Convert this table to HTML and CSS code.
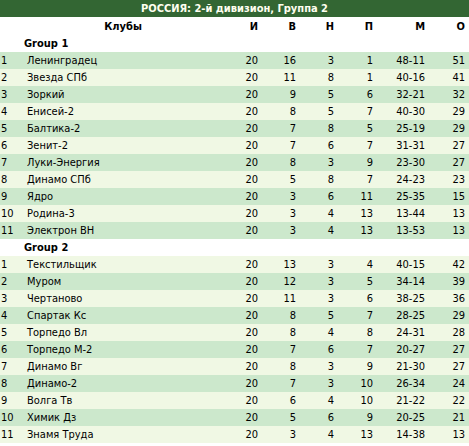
FILE: index.html
```html
<!DOCTYPE html>
<html lang="ru">
<head>
<meta charset="utf-8">
<title>РОССИЯ: 2-й дивизион, Группа 2</title>
<link rel="stylesheet" href="styles.css">
</head>
<body>
<div class="title">РОССИЯ: 2-й дивизион, Группа 2</div>
<table class="standings">
<colgroup>
<col class="c-pos"><col class="c-team"><col class="c-n"><col class="c-n"><col class="c-n"><col class="c-p"><col class="c-m"><col class="c-o">
</colgroup>
<thead>
<tr class="head"><th></th><th class="team-h">Клубы</th><th>И</th><th>В</th><th>Н</th><th>П</th><th>М</th><th>О</th></tr>
</thead>
<tbody>
<tr class="group"><td colspan="8">Group 1</td></tr>
<tr class="odd"><td class="pos">1</td><td class="team">Ленинградец</td><td>20</td><td>16</td><td>3</td><td>1</td><td>48-11</td><td>51</td></tr>
<tr class="even"><td class="pos">2</td><td class="team">Звезда СПб</td><td>20</td><td>11</td><td>8</td><td>1</td><td>40-16</td><td>41</td></tr>
<tr class="odd"><td class="pos">3</td><td class="team">Зоркий</td><td>20</td><td>9</td><td>5</td><td>6</td><td>32-21</td><td>32</td></tr>
<tr class="even"><td class="pos">4</td><td class="team">Енисей-2</td><td>20</td><td>8</td><td>5</td><td>7</td><td>40-30</td><td>29</td></tr>
<tr class="odd"><td class="pos">5</td><td class="team">Балтика-2</td><td>20</td><td>7</td><td>8</td><td>5</td><td>25-19</td><td>29</td></tr>
<tr class="even"><td class="pos">6</td><td class="team">Зенит-2</td><td>20</td><td>7</td><td>6</td><td>7</td><td>31-31</td><td>27</td></tr>
<tr class="odd"><td class="pos">7</td><td class="team">Луки-Энергия</td><td>20</td><td>8</td><td>3</td><td>9</td><td>23-30</td><td>27</td></tr>
<tr class="even"><td class="pos">8</td><td class="team">Динамо СПб</td><td>20</td><td>5</td><td>8</td><td>7</td><td>24-23</td><td>23</td></tr>
<tr class="odd"><td class="pos">9</td><td class="team">Ядро</td><td>20</td><td>3</td><td>6</td><td>11</td><td>25-35</td><td>15</td></tr>
<tr class="even"><td class="pos">10</td><td class="team">Родина-3</td><td>20</td><td>3</td><td>4</td><td>13</td><td>13-44</td><td>13</td></tr>
<tr class="odd"><td class="pos">11</td><td class="team">Электрон ВН</td><td>20</td><td>3</td><td>4</td><td>13</td><td>13-53</td><td>13</td></tr>
<tr class="group"><td colspan="8">Group 2</td></tr>
<tr class="even"><td class="pos">1</td><td class="team">Текстильщик</td><td>20</td><td>13</td><td>3</td><td>4</td><td>40-15</td><td>42</td></tr>
<tr class="odd"><td class="pos">2</td><td class="team">Муром</td><td>20</td><td>12</td><td>3</td><td>5</td><td>34-14</td><td>39</td></tr>
<tr class="even"><td class="pos">3</td><td class="team">Чертаново</td><td>20</td><td>11</td><td>3</td><td>6</td><td>38-25</td><td>36</td></tr>
<tr class="odd"><td class="pos">4</td><td class="team">Спартак Кс</td><td>20</td><td>8</td><td>5</td><td>7</td><td>28-25</td><td>29</td></tr>
<tr class="even"><td class="pos">5</td><td class="team">Торпедо Вл</td><td>20</td><td>8</td><td>4</td><td>8</td><td>24-31</td><td>28</td></tr>
<tr class="odd"><td class="pos">6</td><td class="team">Торпедо М-2</td><td>20</td><td>7</td><td>6</td><td>7</td><td>20-27</td><td>27</td></tr>
<tr class="even"><td class="pos">7</td><td class="team">Динамо Вг</td><td>20</td><td>8</td><td>3</td><td>9</td><td>21-30</td><td>27</td></tr>
<tr class="odd"><td class="pos">8</td><td class="team">Динамо-2</td><td>20</td><td>7</td><td>3</td><td>10</td><td>26-34</td><td>24</td></tr>
<tr class="even"><td class="pos">9</td><td class="team">Волга Тв</td><td>20</td><td>6</td><td>4</td><td>10</td><td>21-22</td><td>22</td></tr>
<tr class="odd"><td class="pos">10</td><td class="team">Химик Дз</td><td>20</td><td>5</td><td>6</td><td>9</td><td>20-25</td><td>21</td></tr>
<tr class="even"><td class="pos">11</td><td class="team">Знамя Труда</td><td>20</td><td>3</td><td>4</td><td>13</td><td>14-38</td><td>13</td></tr>
</tbody>
</table>
</body>
</html>
```
FILE: styles.css
```css
html, body {
  margin: 0;
  padding: 0;
  background: #ffffff;
}
body {
  width: 469px;
  font-family: "DejaVu Sans", Verdana, sans-serif;
  font-stretch: condensed;
  font-size: 11px;
  color: #000000;
}
.title {
  height: 17px;
  line-height: 17px;
  background: #336633;
  color: #fffff0;
  font-weight: bold;
  text-align: center;
}
.standings {
  width: 469px;
  border-collapse: collapse;
  table-layout: fixed;
}
.c-pos { width: 26px; }
.c-team { width: 198px; }
.c-n { width: 38px; }
.c-p { width: 39px; }
.c-m { width: 52px; }
.c-o { width: 40px; }
.standings th,
.standings td {
  padding: 0 4px 0 0;
  height: 17px;
  line-height: 17px;
  text-align: right;
  white-space: nowrap;
  overflow: hidden;
}
.head th {
  height: 18px;
  font-weight: bold;
}
.head th.team-h {
  text-align: center;
}
.group td {
  text-align: left;
  font-weight: bold;
  padding-left: 24px;
  background: #ffffff;
}
.standings td.pos {
  text-align: left;
  padding-left: 1px;
}
.standings td.team {
  text-align: left;
  padding-left: 1px;
}
.odd { background: #cce8cc; }
.even { background: #f0f8e4; }
```
